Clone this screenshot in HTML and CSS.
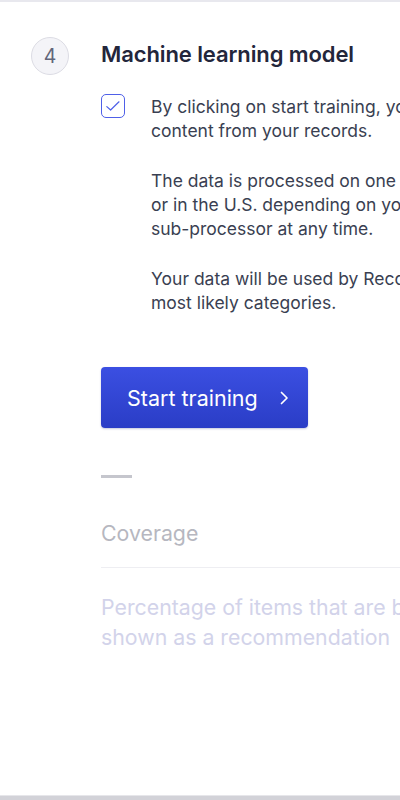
FILE: index.html
```html
<!DOCTYPE html>
<html lang="en">
<head>
<meta charset="utf-8">
<title>Machine learning model</title>
<link rel="stylesheet" href="styles.css">
</head>
<body>
<div class="page">
  <div class="topbar"></div>
  <section class="step">
    <div class="step-num">4</div>
    <div class="step-body">
      <h2 class="step-title">Machine learning model</h2>
      <div class="consent">
        <span class="checkbox">
          <svg width="16" height="16" viewBox="0 0 16 16"><path d="M1.8 8.6 L5.6 12 L14 3.8" fill="none" stroke="#4f60e8" stroke-width="1.2" stroke-linecap="round" stroke-linejoin="round"/></svg>
        </span>
        <div class="consent-text">
          <p>By clicking on start training, you agree to let us analyse<br>content from your records.</p>
          <p>The data is processed on one of our servers in the E.U.<br>or in the U.S. depending on your region. You can delete it from our<br>sub-processor at any time.</p>
          <p>Your data will be used by Recommend to predict the<br>most likely categories.</p>
        </div>
      </div>
      <button class="btn">Start training
        <svg class="chev" width="12" height="16" viewBox="0 0 12 16"><path d="M3.5 2.5 L9 8 L3.5 13.5" fill="none" stroke="#fff" stroke-width="1.7" stroke-linecap="round" stroke-linejoin="round"/></svg>
      </button>
      <div class="dash"></div>
      <div class="metric-label">Coverage</div>
      <div class="metric-desc">Percentage of items that are being<br>shown as a recommendation</div>
    </div>
  </section>
  <div class="bottombar"></div>
</div>
</body>
</html>
```
FILE: styles.css
```css
* { box-sizing: border-box; }
html, body { margin: 0; padding: 0; background: #fff; }
body {
  font-family: Inter, "Noto Sans", sans-serif;
  width: 400px;
  height: 800px;
  overflow: hidden;
}
.page {
  height: 800px;
  display: flex;
  flex-direction: column;
  overflow: hidden;
}
.topbar {
  height: 2px;
  background: #e8e8ee;
  flex: none;
}
.step {
  flex: 1;
  display: flex;
  padding: 35px 0 0 31px;
  gap: 32px;
  overflow: hidden;
}
.step-num {
  flex: none;
  width: 38px;
  height: 38px;
  border-radius: 50%;
  border: 1px solid #dcdce4;
  background: #f4f4f8;
  color: #62667a;
  font-size: 19.5px;
  display: flex;
  align-items: center;
  justify-content: center;
}
.step-body {
  flex: none;
  width: 600px;
}
.step-title {
  margin: 3px 0 0;
  font-size: 22px;
  font-weight: 600;
  line-height: 28px;
  color: #23263b;
  letter-spacing: -0.1px;
  white-space: nowrap;
}
.consent {
  display: flex;
  align-items: flex-start;
  gap: 26px;
  margin-top: 27px;
}
.checkbox {
  flex: none;
  width: 24px;
  height: 24px;
  border: 1.7px solid #4f60e8;
  border-radius: 5px;
  display: flex;
  align-items: center;
  justify-content: center;
  margin-top: -1px;
}
.consent-text {
  white-space: nowrap;
  color: #3a3f52;
  font-size: 17.5px;
  line-height: 24px;
}
.consent-text p { margin: 0 0 26px; }
.consent-text p:last-child { margin-bottom: 0; }
.btn {
  margin-top: 52px;
  width: 207px;
  height: 61px;
  border: none;
  border-radius: 4px;
  background: linear-gradient(180deg, #3b4fe2 0%, #2a3dc6 100%);
  box-shadow: 0 1px 2px rgba(30, 40, 120, 0.25);
  color: #fff;
  font-family: Inter, "Noto Sans", sans-serif;
  font-size: 21.5px;
  display: flex;
  align-items: center;
  padding: 0 0 0 26px;
  gap: 20px;
}
.chev { flex: none; }
.dash {
  margin-top: 47px;
  width: 31px;
  height: 3px;
  background: #c5c6cd;
}
.metric-label {
  margin-top: 43px;
  font-size: 21.3px;
  line-height: 24px;
  color: #b6b7c0;
  padding-bottom: 22px;
  border-bottom: 1px solid #eeeef2;
}
.metric-desc {
  margin-top: 24px;
  white-space: nowrap;
  font-size: 21.3px;
  line-height: 30px;
  color: #d2d3ea;
}
.bottombar {
  flex: none;
  height: 5px;
  background: #d2d2d8;
  border-top: 1px solid #e6e6ea;
}
```
